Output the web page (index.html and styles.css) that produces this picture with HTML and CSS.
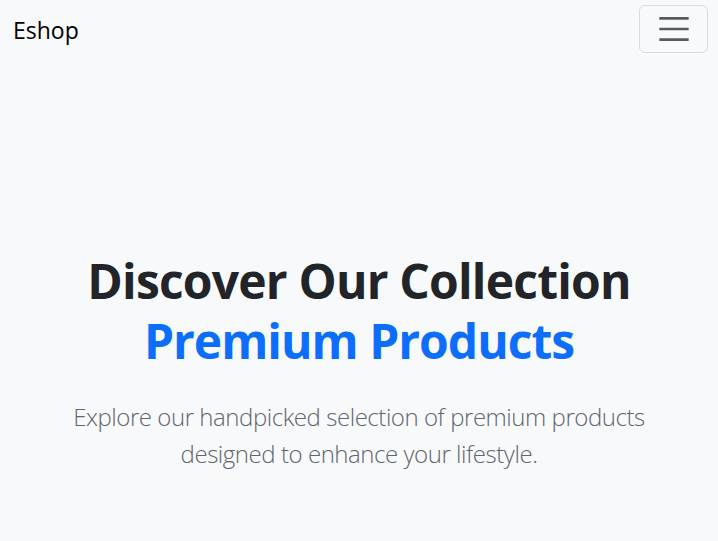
FILE: index.html
```html
<!DOCTYPE html>
<html lang="en">
<head>
<meta charset="utf-8">
<title>Eshop</title>
<link rel="stylesheet" href="styles.css">
</head>
<body>
<nav class="navbar">
  <a class="brand" href="#">Eshop</a>
  <button class="toggler" aria-label="Toggle navigation">
    <svg width="40" height="40" viewBox="0 0 30 30"><path stroke="rgba(33,37,41,0.75)" stroke-linecap="butt" stroke-miterlimit="10" stroke-width="2" d="M4 7h22M4 15h22M4 23h22"/></svg>
  </button>
</nav>
<section class="hero">
  <h1 class="title">Discover Our Collection<br><span class="accent">Premium Products</span></h1>
  <p class="lead">Explore our handpicked selection of premium products<br>designed to enhance your lifestyle.</p>
</section>
</body>
</html>
```
FILE: styles.css
```css
html, body {
  margin: 0;
  padding: 0;
  background: #f8f9fa;
  font-family: "Open Sans", "Noto Sans", sans-serif;
  color: #212529;
}
.navbar {
  display: flex;
  justify-content: space-between;
  align-items: center;
  padding: 5px 10px 0 13px;
  height: 48px;
}
.brand {
  font-size: 23px;
  color: #000;
  text-decoration: none;
  letter-spacing: 0;
  padding-top: 2px;
}
.toggler {
  width: 69px;
  height: 48px;
  border: 1px solid rgba(0,0,0,0.12);
  border-radius: 6px;
  background: transparent;
  display: flex;
  align-items: center;
  justify-content: center;
  padding: 0;
}
.hero {
  text-align: center;
  padding-top: 198px;
}
.title {
  margin: 0;
  font-size: 48px;
  font-weight: 700;
  line-height: 60px;
  letter-spacing: -0.8px;
}
.accent {
  color: #0d6efd;
  letter-spacing: -1px;
}
.lead {
  margin: 27px 0 0;
  font-size: 24px;
  font-weight: 300;
  line-height: 37px;
  color: #5f666d;
  letter-spacing: -0.45px;
}
```
